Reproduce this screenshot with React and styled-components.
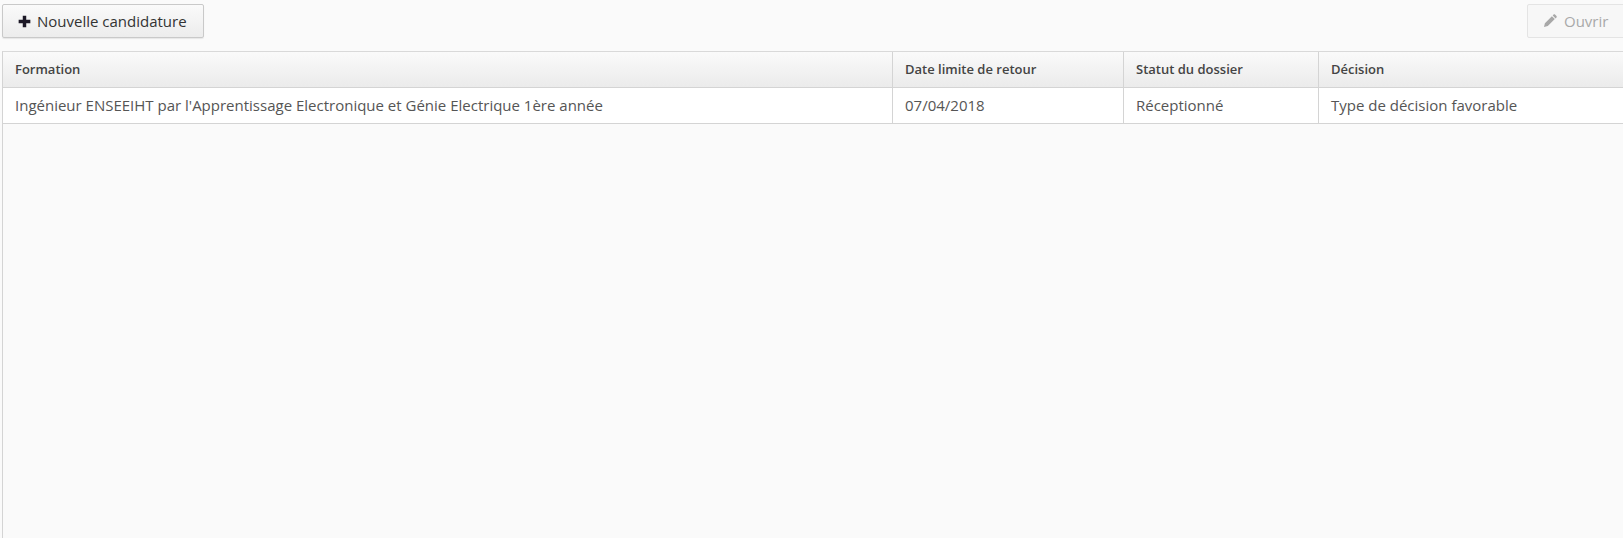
import React from "react";
import styled, { createGlobalStyle } from "styled-components";

const Global = createGlobalStyle`
  html, body { margin: 0; padding: 0; height: 100%; background: #fafafa; overflow: hidden; }
  #root { height: 538px; }
  * { box-sizing: border-box; }
  body { font-family: "Open Sans", "Liberation Sans", sans-serif; }
`;

const Page = styled.div`
  width: 1623px;
  height: 538px;
  padding: 4px 0 0 2px;
  display: flex;
  flex-direction: column;
  overflow: hidden;
  background: #fafafa;
`;

const Toolbar = styled.div`
  display: flex;
  justify-content: space-between;
  height: 34px;
  margin-bottom: 13px;
`;

const Button = styled.button`
  display: flex;
  align-items: center;
  gap: ${(p) => (p.$disabled ? "7px" : "6px")};
  height: 34px;
  width: ${(p) => (p.$disabled ? "100px" : "202px")};
  padding: 0 0 0 ${(p) => (p.$disabled ? "15px" : "15px")};
  margin-right: ${(p) => (p.$disabled ? "-4px" : "0")};
  font: 400 15px "Open Sans", sans-serif;
  color: ${(p) => (p.$disabled ? "#a9a9a9" : "#333")};
  border: 1px solid ${(p) => (p.$disabled ? "#e4e4e4" : "#c9c9c9")};
  border-radius: 2px;
  background: ${(p) => (p.$disabled ? "#f7f7f7" : "linear-gradient(#fafafa, #ececec)")};
  box-shadow: ${(p) => (p.$disabled ? "none" : "0 1px 1px rgba(0,0,0,.08)")};
`;

const Panel = styled.div`
  flex: 1;
  border-left: 1px solid #d4d4d4;
  border-top: 1px solid #d9d9d9;
`;

const Table = styled.table`
  width: 1621px;
  table-layout: fixed;
  border-collapse: separate;
  border-spacing: 0;
  color: #555;
`;

const HeadCell = styled.th`
  height: 36px;
  padding: 0 0 2px 12px;
  text-align: left;
  font: 600 13px "Open Sans", sans-serif;
  color: #444;
  background: linear-gradient(#fafafa, #ebebeb);
  border-bottom: 1px solid #d4d4d4;
  border-left: ${(p) => (p.$first ? "0" : "1px solid #d4d4d4")};
`;

const Cell = styled.td`
  height: 36px;
  padding: 0 0 2px 12px;
  font: 400 15px "Open Sans", sans-serif;
  color: #555;
  background: #fff;
  border-bottom: 1px solid #d4d4d4;
  border-left: ${(p) => (p.$first ? "0" : "1px solid #d4d4d4")};
  white-space: nowrap;
`;

const Plus = () => (
  <svg width="13" height="13" viewBox="0 0 12 12">
    <path d="M4.4 0.6h3.2v3.8h3.8v3.2H7.6v3.8H4.4V7.6H0.6V4.4h3.8z" fill="#1c1826" />
  </svg>
);

const Pencil = () => (
  <svg width="14" height="14" viewBox="0 0 14 14">
    <path d="M1 13l.9-3.8 7-7 2.9 2.9-7 7zM9.7 1.5l.9-.9c.4-.4 1-.4 1.4 0l1.5 1.5c.4.4.4 1 0 1.4l-.9.9z" fill="#a8a8a8" />
  </svg>
);

const columns = ["Formation", "Date limite de retour", "Statut du dossier", "Décision"];
const row = [
  "Ingénieur ENSEEIHT par l'Apprentissage Electronique et Génie Electrique 1ère année",
  "07/04/2018",
  "Réceptionné",
  "Type de décision favorable",
];
const widths = [889, 231, 195, 306];

export default function App() {
  return (
    <>
      <Global />
      <Page>
        <Toolbar>
          <Button><Plus />Nouvelle candidature</Button>
          <Button $disabled><Pencil />Ouvrir</Button>
        </Toolbar>
        <Panel>
          <Table>
            <colgroup>
              {widths.map((w) => <col key={w} style={{ width: w }} />)}
            </colgroup>
            <thead>
              <tr>{columns.map((c, i) => <HeadCell key={c} $first={i === 0}>{c}</HeadCell>)}</tr>
            </thead>
            <tbody>
              <tr>{row.map((c, i) => <Cell key={c} $first={i === 0}>{c}</Cell>)}</tr>
            </tbody>
          </Table>
        </Panel>
      </Page>
    </>
  );
}
